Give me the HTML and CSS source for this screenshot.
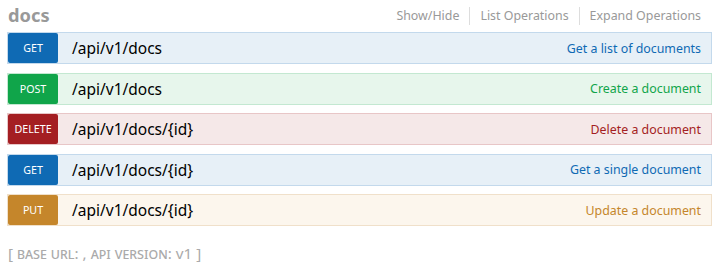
FILE: index.html
```html
<!DOCTYPE html>
<html lang="en">
<head>
    <meta charset="UTF-8">
    <title>docs</title>
    <link rel="stylesheet" href="styles.css">
</head>
<body>
    <div class="container">
        <div class="resource-heading">
            <h2>docs</h2>
            <ul class="options">
                <li>Show/Hide</li>
                <li>List Operations</li>
                <li>Expand Operations</li>
            </ul>
        </div>

        <ul class="operations">
            <li class="operation get">
                <span class="method">GET</span>
                <span class="path">/api/v1/docs</span>
                <span class="summary">Get a list of documents</span>
            </li>
            <li class="operation post">
                <span class="method">POST</span>
                <span class="path">/api/v1/docs</span>
                <span class="summary">Create a document</span>
            </li>
            <li class="operation delete">
                <span class="method">DELETE</span>
                <span class="path">/api/v1/docs/{id}</span>
                <span class="summary">Delete a document</span>
            </li>
            <li class="operation get">
                <span class="method">GET</span>
                <span class="path">/api/v1/docs/{id}</span>
                <span class="summary">Get a single document</span>
            </li>
            <li class="operation put">
                <span class="method">PUT</span>
                <span class="path">/api/v1/docs/{id}</span>
                <span class="summary">Update a document</span>
            </li>
        </ul>

        <div class="footer">
            [ <span class="caps">base url</span>: , <span class="caps">api version</span>: v1 ]
        </div>
    </div>
</body>
</html>
```

FILE: styles.css
```css
body {
    font-family: 'Noto Sans', 'Open Sans', sans-serif;
    background-color: #fff;
    color: #000;
    margin: 0;
    padding: 0;
}
.container {
    margin: 0 3px 0 7px;
}
.resource-heading {
    display: flex;
    justify-content: space-between;
    align-items: center;
    height: 32px;
}
.resource-heading h2 {
    margin: 0 0 3px 1px;
    font-size: 18.3px;
    line-height: 24px;
    font-weight: bold;
    color: #999;
}
.options {
    display: flex;
    list-style: none;
    margin: 0;
    padding: 0;
}
.options li {
    font-size: 12.4px;
    line-height: 18px;
    color: #999;
    padding: 0 10px;
    border-right: 1px solid #ddd;
}
.options li:last-child {
    border-right: none;
    padding-right: 11px;
}
.operations {
    list-style: none;
    margin: 0;
    padding: 0;
}
.operation {
    display: flex;
    align-items: center;
    height: 30px;
    border: 1px solid;
    margin-bottom: 8.5px;
}
.method {
    width: 50px;
    height: 30px;
    line-height: 31px;
    text-align: center;
    font-size: 10.7px;
    color: #fff;
    border-radius: 2px;
}
.path {
    padding-left: 14px;
    font-size: 15.5px;
    flex: 1;
}
.summary {
    padding-right: 10px;
    font-size: 12.4px;
}
.get { background-color: #e7f0f7; border-color: #c3d9ec; }
.get .method { background-color: #0f6ab4; }
.get .summary { color: #0f6ab4; }
.post { background-color: #e7f6ec; border-color: #c3e8d1; }
.post .method { background-color: #10a54a; }
.post .summary { color: #10a54a; }
.delete { background-color: #f5e8e8; border-color: #e8c6c7; }
.delete .method { background-color: #a41e22; }
.delete .summary { color: #a41e22; }
.put { background-color: #fcf6ed; border-color: #f0e0ca; }
.put .method { background-color: #c5862b; }
.put .summary { color: #c5862b; }
.footer {
    margin-top: 17px;
    padding-left: 1px;
    font-size: 15.3px;
    color: #aaa;
}
.caps {
    font-variant: small-caps;
}
```
